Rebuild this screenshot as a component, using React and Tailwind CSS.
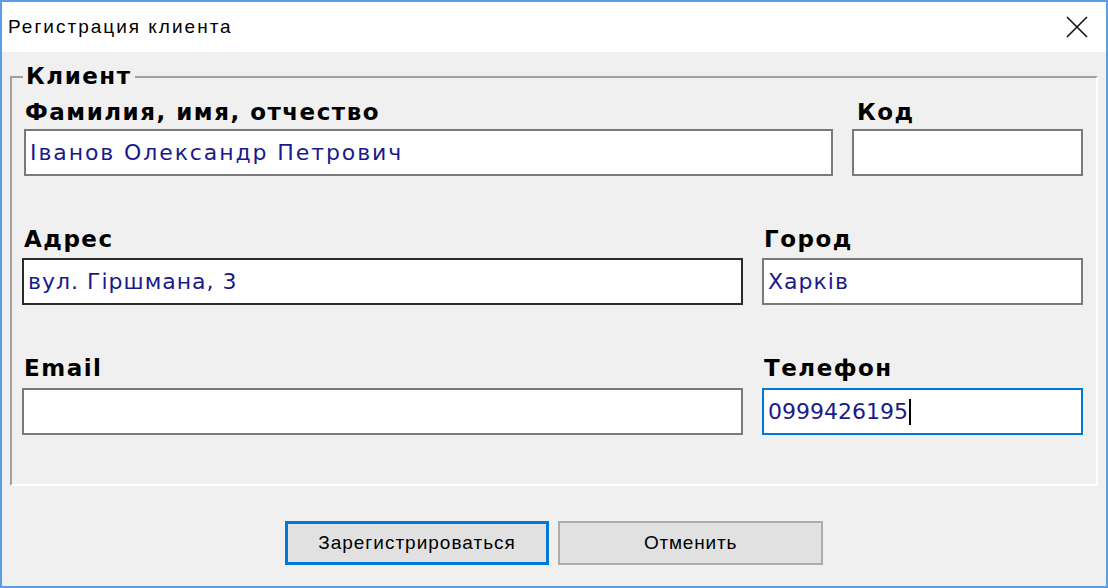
import React from "react";

const labelCls =
  "block h-[24px] leading-[24px] text-[23px] font-bold text-black tracking-[1.5px]";
const inputBase =
  "h-[47px] bg-white border-2 px-[4px] flex items-center text-[22px] text-[#1a1a8c]";

const Field = ({
  label,
  value,
  width,
  border = "border-[#7a7a7a]",
  caret,
  labelPad = "pl-[2px]",
  gap = "gap-[6px]",
  track = "tracking-[1px]",
}) => (
  <div className={`flex flex-col ${gap}`} style={{ width }}>
    <span className={`${labelCls} ${labelPad}`}>{label}</span>
    <div className={`${inputBase} ${border} ${track}`}>
      <span className="whitespace-nowrap">{value}</span>
      {caret && <span className="w-[2px] h-[26px] bg-black ml-[1px]"></span>}
    </div>
  </div>
);

const App = () => {
  return (
    <div
      className="w-[1108px] h-[588px] border-2 border-[#5c9ee6] bg-[#f0f0f0] flex flex-col overflow-hidden"
      style={{ fontFamily: '"DejaVu Sans", "Noto Sans", sans-serif' }}
    >
      <div className="h-[50px] bg-white flex items-center justify-between pl-[6px] pr-[18px] shrink-0">
        <span
          className="text-[19px] text-black tracking-[2px]"
          style={{ fontFamily: '"Liberation Sans", Arial, sans-serif' }}
        >
          Регистрация клиента
        </span>
        <svg width="22" height="22" viewBox="0 0 22 22">
          <path d="M1 1 L21 21 M21 1 L1 21" stroke="#111" strokeWidth="1.6" fill="none" />
        </svg>
      </div>

      <div className="flex-1 flex flex-col px-[8px] pt-[24px]">
        <div className="relative h-[410px] border-2 border-t-[#a0a0a0] border-l-[#a0a0a0] border-r-white border-b-white pl-[10px] pr-[12px] pt-[22px]">
          <span className="absolute left-[11px] top-[-14px] px-[3px] bg-[#f0f0f0] text-[23px] font-bold leading-[24px] tracking-[1.5px]">
            Клиент
          </span>

          <div className="flex gap-[19px] pl-[2px]">
            <Field
              label="Фамилия, имя, отчество"
              value="Іванов Олександр Петрович"
              width={809}
              gap="gap-[5px]"
              labelPad="pl-[1px]"
              track="tracking-[1.9px]"
            />
            <Field label="Код" value="" width={231} labelPad="pl-[5px]" gap="gap-[5px]" />
          </div>

          <div className="flex gap-[19px] mt-[51px]">
            <Field label="Адрес" value="вул. Гіршмана, 3" width={721} border="border-[#2b2b2b]" gap="gap-[7px]" />
            <Field label="Город" value="Харків" width={321} gap="gap-[7px]" />
          </div>

          <div className="flex gap-[19px] mt-[51px]">
            <Field label="Email" value="" width={721} gap="gap-[8px]" />
            <Field
              label="Телефон"
              value="0999426195"
              width={321}
              border="border-[#0078d7]"
              caret
              gap="gap-[8px]"
              track="tracking-[0px]"
            />
          </div>
        </div>

        <div
          className="flex justify-center gap-[9px] mt-[35px]"
          style={{ fontFamily: '"Liberation Sans", Arial, sans-serif' }}
        >
          <button className="w-[264px] h-[44px] border-[3px] border-[#0078d7] bg-[#e1e1e1] text-[19px] text-black tracking-[1px]">
            Зарегистрироваться
          </button>
          <button className="w-[265px] h-[44px] border-2 border-[#adadad] bg-[#e1e1e1] text-[19px] text-black tracking-[0.8px]">
            Отменить
          </button>
        </div>
      </div>
    </div>
  );
};

export default App;
